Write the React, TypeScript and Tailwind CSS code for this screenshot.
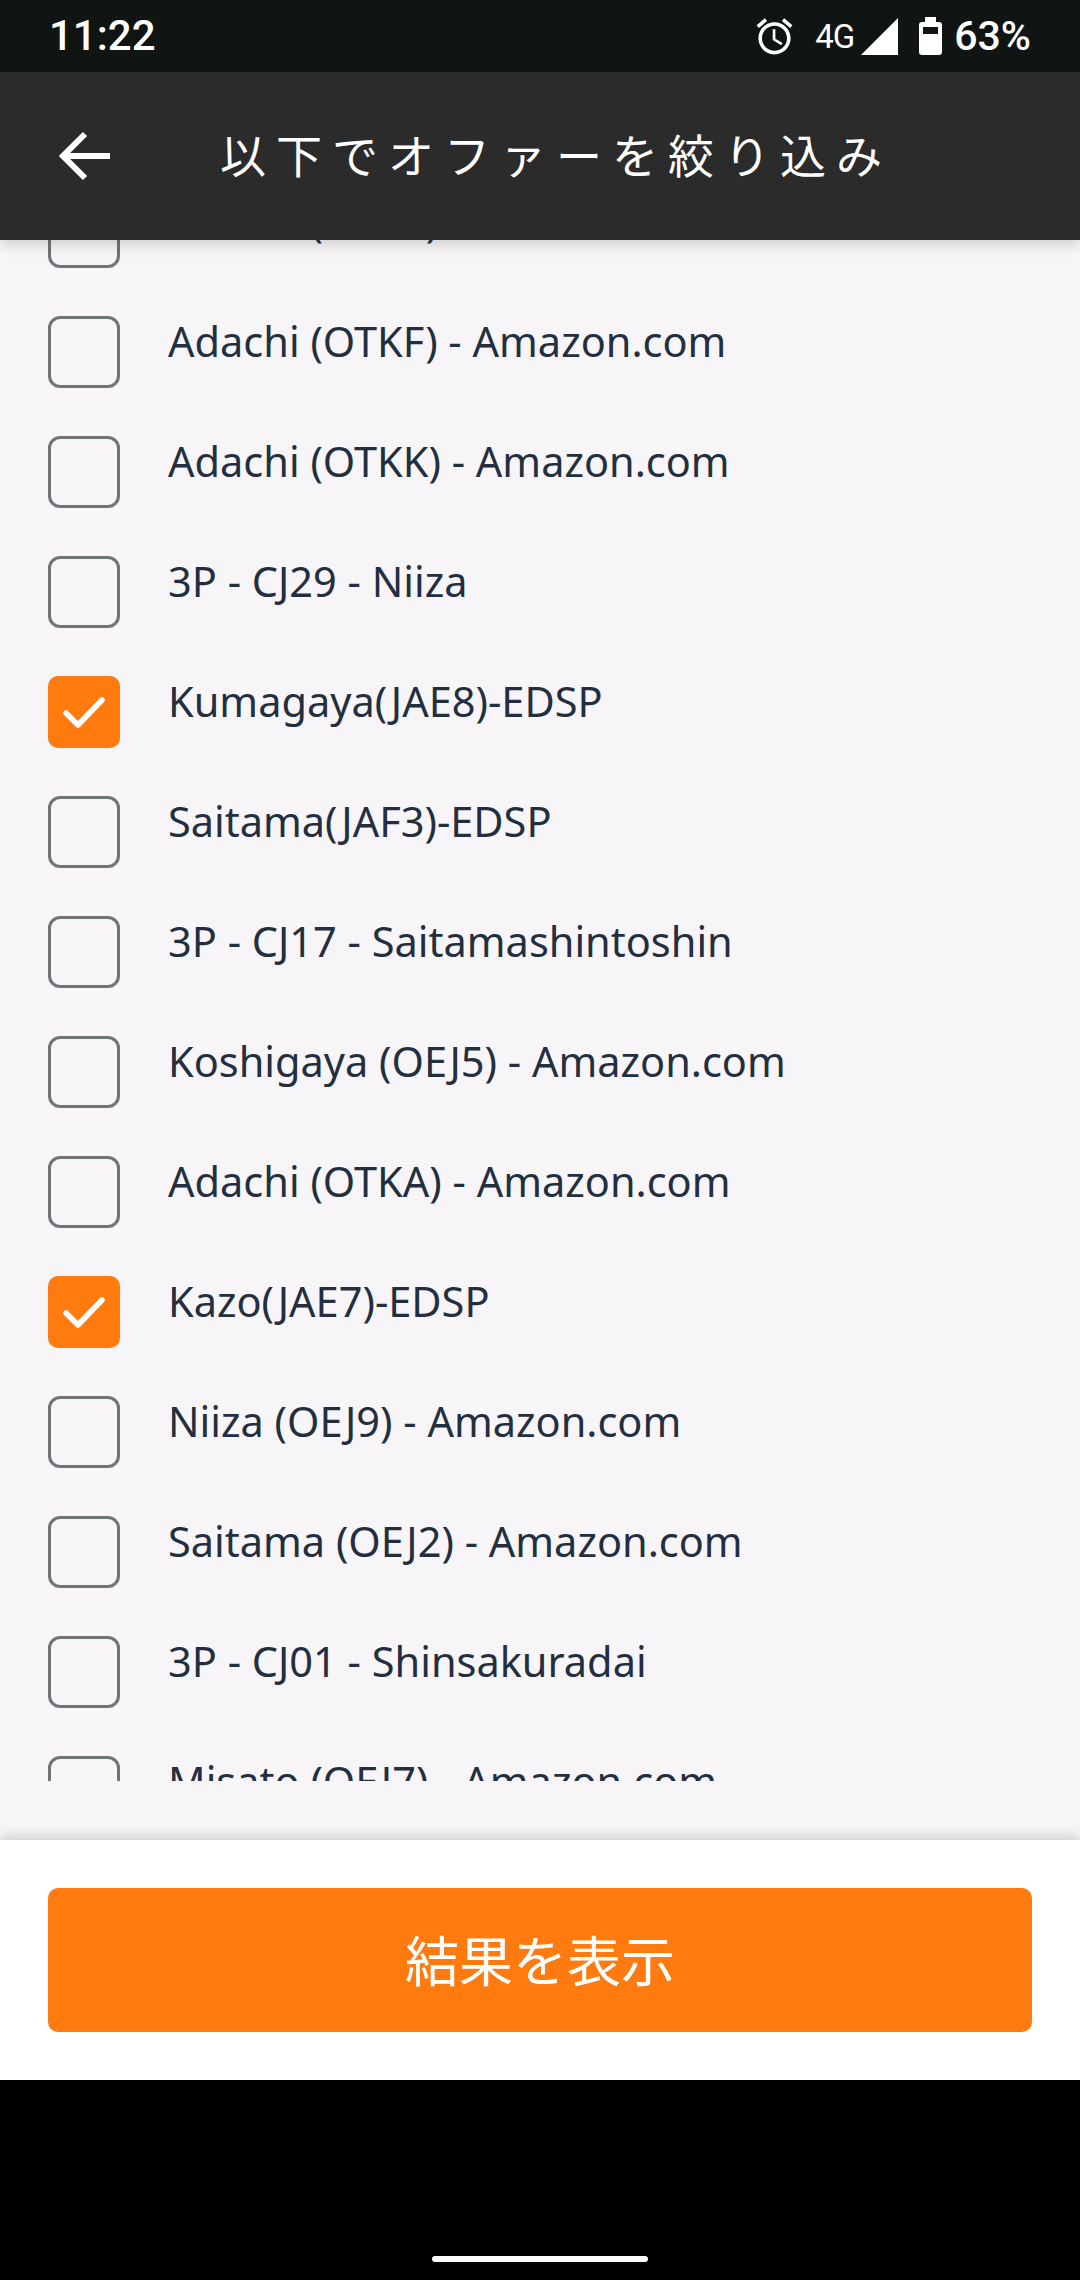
const stores = [
  { name: 'Adachi (OTKE) - Amazon.com', checked: false },
  { name: 'Adachi (OTKF) - Amazon.com', checked: false },
  { name: 'Adachi (OTKK) - Amazon.com', checked: false },
  { name: '3P - CJ29 - Niiza', checked: false },
  { name: 'Kumagaya(JAE8)-EDSP', checked: true },
  { name: 'Saitama(JAF3)-EDSP', checked: false },
  { name: '3P - CJ17 - Saitamashintoshin', checked: false },
  { name: 'Koshigaya (OEJ5) - Amazon.com', checked: false },
  { name: 'Adachi (OTKA) - Amazon.com', checked: false },
  { name: 'Kazo(JAE7)-EDSP', checked: true },
  { name: 'Niiza (OEJ9) - Amazon.com', checked: false },
  { name: 'Saitama (OEJ2) - Amazon.com', checked: false },
  { name: '3P - CJ01 - Shinsakuradai', checked: false },
  { name: 'Misato (OEJ7) - Amazon.com', checked: false },
];

function StatusBar() {
  return (
    <div className="flex h-[72px] shrink-0 items-center justify-between bg-[#101412] pl-[49px] pr-[49px] font-['Roboto',sans-serif] text-white">
      <span className="text-[42px] font-medium leading-none">11:22</span>
      <div className="flex items-center">
        <svg width="43" height="43" viewBox="0 0 24 24" fill="#fff">
          <path d="M22 5.72l-4.6-3.86-1.29 1.53 4.6 3.86L22 5.72zM7.88 3.39L6.6 1.86 2 5.71l1.29 1.53 4.59-3.85zM12.5 8H11v6l4.75 2.85.75-1.23-4-2.37V8zM12 4c-4.97 0-9 4.03-9 9s4.03 9 9 9c4.97 0 9-4.03 9-9s-4.03-9-9-9zm0 16c-3.87 0-7-3.13-7-7s3.13-7 7-7 7 3.13 7 7-3.13 7-7 7z" />
        </svg>
        <span className="ml-[19px] text-[33px] leading-none tracking-[-1px]">4G</span>
        <svg className="ml-[7px]" width="37" height="37" viewBox="0 0 37 37" fill="#fff">
          <path d="M37 0V37H0Z" />
        </svg>
        <svg className="ml-[21px]" width="23" height="38" viewBox="0 0 23 38" fill="#fff">
          <path fillRule="evenodd" d="M6 0h11v5h3a3 3 0 0 1 3 3v27a3 3 0 0 1-3 3H3a3 3 0 0 1-3-3V8a3 3 0 0 1 3-3h3ZM4 10v7h15v-7Z" />
        </svg>
        <span className="ml-[12px] text-[41px] font-medium leading-none">63%</span>
      </div>
    </div>
  );
}

function Checkbox({ checked }: { checked: boolean }) {
  if (checked) {
    return (
      <div className="flex h-[72px] w-[72px] shrink-0 items-center justify-center rounded-[10px] bg-[#ff7a0f]">
        <svg width="42" height="31" viewBox="0 0 42 31" fill="none" stroke="#fff" strokeWidth="5.5" strokeLinecap="round" strokeLinejoin="round">
          <path d="M3 16l12 12L39 3" />
        </svg>
      </div>
    );
  }
  return <div className="h-[72px] w-[72px] shrink-0 rounded-[12px] border-[3px] border-[#6f7477]" />;
}

export default function App() {
  return (
    <div className="flex h-[2280px] w-[1080px] flex-col overflow-hidden bg-black">
      <StatusBar />
      <div className="relative z-10 flex h-[168px] shrink-0 items-center bg-[#2b2b2b] pl-[58px] shadow-[0_4px_14px_rgba(0,0,0,0.18)]">
        <svg width="54" height="50" viewBox="0 0 54 50" fill="none" stroke="#fff" strokeWidth="6">
          <path d="M52 25H6M27 3L5 25l22 22" />
        </svg>
        <span className="ml-[108px] pb-[6px] font-['Noto_Sans_CJK_JP',sans-serif] text-[46px] leading-none tracking-[10px] text-white">
          以下でオファーを絞り込み
        </span>
      </div>

      <div className="flex h-[1600px] shrink-0 flex-col bg-[#f8f5f9] pb-[59px]">
        <div className="flex-1 overflow-hidden">
          <div className="-mt-[68px] flex flex-col pl-[48px]">
            {stores.map((store) => (
              <div key={store.name} className="flex h-[120px] shrink-0 items-center">
                <Checkbox checked={store.checked} />
                <span className="ml-[48px] pb-[20px] font-['Noto_Sans',sans-serif] text-[41.5px] leading-none text-[#232f3e]">
                  {store.name}
                </span>
              </div>
            ))}
          </div>
        </div>
      </div>

      <div className="relative z-10 flex h-[240px] shrink-0 items-center bg-white px-[48px] shadow-[0_-3px_12px_rgba(0,0,0,0.18)]">
        <button className="flex h-[144px] w-full items-center justify-center rounded-[10px] bg-[#ff7a0f] pb-[2px] font-['Noto_Sans_CJK_JP',sans-serif] text-[54px] leading-none text-white">
          結果を表示
        </button>
      </div>

      <div className="flex flex-1 items-end justify-center pb-[18px]">
        <div className="h-[6px] w-[216px] rounded-full bg-white" />
      </div>
    </div>
  );
}
